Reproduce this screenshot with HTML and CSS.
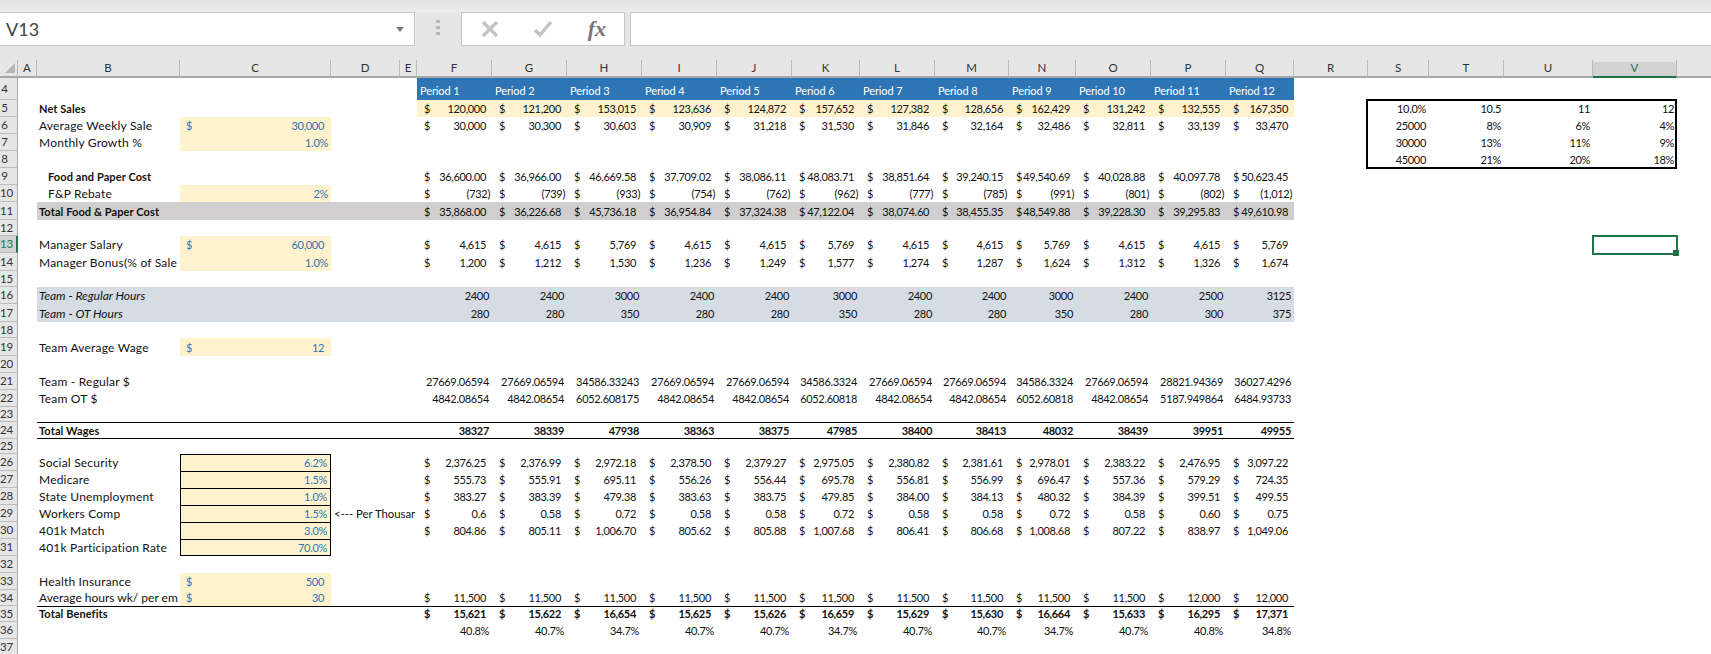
FILE: index.html
```html
<!DOCTYPE html>
<html lang="en">
<head>
<meta charset="utf-8">
<title>V13 - Sheet</title>
<link rel="stylesheet" href="styles.css">
</head>
<body>
<header class="fbar">
  <div class="namebox"><span class="ref">V13</span><svg class="caret" width="8" height="5" viewBox="0 0 8 5"><path d="M0 0h8L4 5z"/></svg></div>
  <div class="grip"><b></b><b></b><b></b></div>
  <div class="btns">
    <svg width="18" height="16" viewBox="0 0 18 16"><path d="M2 1l14 14M16 1L2 15" class="ic"/></svg>
    <svg width="20" height="16" viewBox="0 0 20 16"><path d="M2 9l5 5L18 1" class="ic"/></svg>
    <span class="fx">fx</span>
  </div>
  <div class="input"></div>
</header>
<table class="sheet">
<colgroup>
<col class="w18"><col class="w19"><col class="w143"><col class="w151"><col class="w69"><col class="w17">
<col class="w75"><col class="w75"><col class="w75"><col class="w75"><col class="w75"><col class="w68"><col class="w75"><col class="w74"><col class="w67"><col class="w75"><col class="w75"><col class="w68">
<col class="w74"><col class="w61"><col class="w75"><col class="w89"><col class="w84"><col class="w34">
</colgroup>
<thead>
<tr class="heads"><th class="corner"><svg width="10" height="10" viewBox="0 0 10 10"><path d="M10 0v10H0z"/></svg></th><th>A</th><th>B</th><th>C</th><th>D</th><th>E</th><th>F</th><th>G</th><th>H</th><th>I</th><th>J</th><th>K</th><th>L</th><th>M</th><th>N</th><th>O</th><th>P</th><th>Q</th><th>R</th><th>S</th><th>T</th><th>U</th><th class="cur">V</th><th class="last"></th></tr>
</thead>
<tbody>
<tr class="h22 hdr"><th>4</th><td></td><td></td><td></td><td colspan="2"></td><td class="p">Period 1</td><td class="p">Period 2</td><td class="p">Period 3</td><td class="p">Period 4</td><td class="p">Period 5</td><td class="p">Period 6</td><td class="p">Period 7</td><td class="p">Period 8</td><td class="p">Period 9</td><td class="p">Period 10</td><td class="p">Period 11</td><td class="p">Period 12</td><td colspan="6" class="end"></td></tr>
<tr class="yel"><th>5</th><td></td><td class="l b">Net Sales</td><td></td><td colspan="2"></td><td class="a"><i>$</i>120,000</td><td class="a"><i>$</i>121,200</td><td class="a"><i>$</i>153,015</td><td class="a"><i>$</i>123,636</td><td class="a"><i>$</i>124,872</td><td class="a"><i>$</i>157,652</td><td class="a"><i>$</i>127,382</td><td class="a"><i>$</i>128,656</td><td class="a"><i>$</i>162,429</td><td class="a"><i>$</i>131,242</td><td class="a"><i>$</i>132,555</td><td class="a"><i>$</i>167,350</td><td></td><td class="n s"><div class="range"></div>10.0%</td><td class="n">10.5</td><td class="n">11</td><td class="n">12</td><td class="end"></td></tr>
<tr><th>6</th><td></td><td class="l">Average Weekly Sale</td><td class="in a"><i>$</i>30,000</td><td colspan="2"></td><td class="a"><i>$</i>30,000</td><td class="a"><i>$</i>30,300</td><td class="a"><i>$</i>30,603</td><td class="a"><i>$</i>30,909</td><td class="a"><i>$</i>31,218</td><td class="a"><i>$</i>31,530</td><td class="a"><i>$</i>31,846</td><td class="a"><i>$</i>32,164</td><td class="a"><i>$</i>32,486</td><td class="a"><i>$</i>32,811</td><td class="a"><i>$</i>33,139</td><td class="a"><i>$</i>33,470</td><td></td><td class="n s">25000</td><td class="n">8%</td><td class="n">6%</td><td class="n">4%</td><td class="end"></td></tr>
<tr><th>7</th><td></td><td class="l">Monthly Growth %</td><td class="in n">1.0%</td><td colspan="14"></td><td></td><td class="n s">30000</td><td class="n">13%</td><td class="n">11%</td><td class="n">9%</td><td class="end"></td></tr>
<tr><th>8</th><td></td><td></td><td></td><td colspan="14"></td><td></td><td class="n s">45000</td><td class="n">21%</td><td class="n">20%</td><td class="n">18%</td><td class="end"></td></tr>
<tr><th>9</th><td></td><td class="l b ind">Food and Paper Cost</td><td></td><td colspan="2"></td><td class="a"><i>$</i>36,600.00</td><td class="a"><i>$</i>36,966.00</td><td class="a"><i>$</i>46,669.58</td><td class="a"><i>$</i>37,709.02</td><td class="a"><i>$</i>38,086.11</td><td class="a"><i>$</i>48,083.71</td><td class="a"><i>$</i>38,851.64</td><td class="a"><i>$</i>39,240.15</td><td class="a"><i>$</i>49,540.69</td><td class="a"><i>$</i>40,028.88</td><td class="a"><i>$</i>40,097.78</td><td class="a"><i>$</i>50,623.45</td><td colspan="6" class="end"></td></tr>
<tr><th>10</th><td></td><td class="l ind">F&amp;P Rebate</td><td class="in n">2%</td><td colspan="2"></td><td class="a"><i>$</i><u>(732)</u></td><td class="a"><i>$</i><u>(739)</u></td><td class="a"><i>$</i><u>(933)</u></td><td class="a"><i>$</i><u>(754)</u></td><td class="a"><i>$</i><u>(762)</u></td><td class="a"><i>$</i><u>(962)</u></td><td class="a"><i>$</i><u>(777)</u></td><td class="a"><i>$</i><u>(785)</u></td><td class="a"><i>$</i><u>(991)</u></td><td class="a"><i>$</i><u>(801)</u></td><td class="a"><i>$</i><u>(802)</u></td><td class="a"><i>$</i><u>(1,012)</u></td><td colspan="6" class="end"></td></tr>
<tr class="h18 gray"><th>11</th><td></td><td class="l b">Total Food &amp; Paper Cost</td><td></td><td colspan="2"></td><td class="a"><i>$</i>35,868.00</td><td class="a"><i>$</i>36,226.68</td><td class="a"><i>$</i>45,736.18</td><td class="a"><i>$</i>36,954.84</td><td class="a"><i>$</i>37,324.38</td><td class="a"><i>$</i>47,122.04</td><td class="a"><i>$</i>38,074.60</td><td class="a"><i>$</i>38,455.35</td><td class="a"><i>$</i>48,549.88</td><td class="a"><i>$</i>39,228.30</td><td class="a"><i>$</i>39,295.83</td><td class="a"><i>$</i>49,610.98</td><td colspan="6" class="end"></td></tr>
<tr class="h16"><th>12</th><td colspan="23"></td></tr>
<tr><th class="cur">13</th><td></td><td class="l">Manager Salary</td><td class="in a"><i>$</i>60,000</td><td colspan="2"></td><td class="a"><i>$</i>4,615</td><td class="a"><i>$</i>4,615</td><td class="a"><i>$</i>5,769</td><td class="a"><i>$</i>4,615</td><td class="a"><i>$</i>4,615</td><td class="a"><i>$</i>5,769</td><td class="a"><i>$</i>4,615</td><td class="a"><i>$</i>4,615</td><td class="a"><i>$</i>5,769</td><td class="a"><i>$</i>4,615</td><td class="a"><i>$</i>4,615</td><td class="a"><i>$</i>5,769</td><td colspan="4"></td><td class="v13"><div class="sel"><span class="handle"></span></div></td><td class="end"></td></tr>
<tr class="h18"><th>14</th><td></td><td class="l">Manager Bonus(% of Sale</td><td class="in n">1.0%</td><td colspan="2"></td><td class="a"><i>$</i>1,200</td><td class="a"><i>$</i>1,212</td><td class="a"><i>$</i>1,530</td><td class="a"><i>$</i>1,236</td><td class="a"><i>$</i>1,249</td><td class="a"><i>$</i>1,577</td><td class="a"><i>$</i>1,274</td><td class="a"><i>$</i>1,287</td><td class="a"><i>$</i>1,624</td><td class="a"><i>$</i>1,312</td><td class="a"><i>$</i>1,326</td><td class="a"><i>$</i>1,674</td><td colspan="6" class="end"></td></tr>
<tr class="h16"><th>15</th><td colspan="23"></td></tr>
<tr class="slate"><th>16</th><td></td><td class="l it">Team - Regular Hours</td><td></td><td colspan="2"></td><td class="n">2400</td><td class="n">2400</td><td class="n">3000</td><td class="n">2400</td><td class="n">2400</td><td class="n">3000</td><td class="n">2400</td><td class="n">2400</td><td class="n">3000</td><td class="n">2400</td><td class="n">2500</td><td class="n">3125</td><td colspan="6" class="end"></td></tr>
<tr class="h18 slate"><th>17</th><td></td><td class="l it">Team - OT Hours</td><td></td><td colspan="2"></td><td class="n">280</td><td class="n">280</td><td class="n">350</td><td class="n">280</td><td class="n">280</td><td class="n">350</td><td class="n">280</td><td class="n">280</td><td class="n">350</td><td class="n">280</td><td class="n">300</td><td class="n">375</td><td colspan="6" class="end"></td></tr>
<tr class="h16"><th>18</th><td colspan="23"></td></tr>
<tr class="h18"><th>19</th><td></td><td class="l">Team Average Wage</td><td class="in a"><i>$</i>12</td><td colspan="20"></td></tr>
<tr><th>20</th><td colspan="23"></td></tr>
<tr><th>21</th><td></td><td class="l">Team - Regular $</td><td></td><td colspan="2"></td><td class="n">27669.06594</td><td class="n">27669.06594</td><td class="n">34586.33243</td><td class="n">27669.06594</td><td class="n">27669.06594</td><td class="n">34586.3324</td><td class="n">27669.06594</td><td class="n">27669.06594</td><td class="n">34586.3324</td><td class="n">27669.06594</td><td class="n">28821.94369</td><td class="n">36027.4296</td><td colspan="6" class="end"></td></tr>
<tr><th>22</th><td></td><td class="l">Team OT $</td><td></td><td colspan="2"></td><td class="n">4842.08654</td><td class="n">4842.08654</td><td class="n">6052.608175</td><td class="n">4842.08654</td><td class="n">4842.08654</td><td class="n">6052.60818</td><td class="n">4842.08654</td><td class="n">4842.08654</td><td class="n">6052.60818</td><td class="n">4842.08654</td><td class="n">5187.949864</td><td class="n">6484.93733</td><td colspan="6" class="end"></td></tr>
<tr class="h15"><th>23</th><td colspan="23"></td></tr>
<tr class="rule2"><th>24</th><td></td><td class="l b">Total Wages</td><td></td><td colspan="2"></td><td class="n b">38327</td><td class="n b">38339</td><td class="n b">47938</td><td class="n b">38363</td><td class="n b">38375</td><td class="n b">47985</td><td class="n b">38400</td><td class="n b">38413</td><td class="n b">48032</td><td class="n b">38439</td><td class="n b">39951</td><td class="n b">49955</td><td colspan="6" class="end"></td></tr>
<tr class="h15"><th>25</th><td colspan="23"></td></tr>
<tr><th>26</th><td></td><td class="l">Social Security</td><td class="in n box">6.2%</td><td colspan="2"></td><td class="a"><i>$</i>2,376.25</td><td class="a"><i>$</i>2,376.99</td><td class="a"><i>$</i>2,972.18</td><td class="a"><i>$</i>2,378.50</td><td class="a"><i>$</i>2,379.27</td><td class="a"><i>$</i>2,975.05</td><td class="a"><i>$</i>2,380.82</td><td class="a"><i>$</i>2,381.61</td><td class="a"><i>$</i>2,978.01</td><td class="a"><i>$</i>2,383.22</td><td class="a"><i>$</i>2,476.95</td><td class="a"><i>$</i>3,097.22</td><td colspan="6" class="end"></td></tr>
<tr><th>27</th><td></td><td class="l">Medicare</td><td class="in n box">1.5%</td><td colspan="2"></td><td class="a"><i>$</i>555.73</td><td class="a"><i>$</i>555.91</td><td class="a"><i>$</i>695.11</td><td class="a"><i>$</i>556.26</td><td class="a"><i>$</i>556.44</td><td class="a"><i>$</i>695.78</td><td class="a"><i>$</i>556.81</td><td class="a"><i>$</i>556.99</td><td class="a"><i>$</i>696.47</td><td class="a"><i>$</i>557.36</td><td class="a"><i>$</i>579.29</td><td class="a"><i>$</i>724.35</td><td colspan="6" class="end"></td></tr>
<tr><th>28</th><td></td><td class="l">State Unemployment</td><td class="in n box">1.0%</td><td colspan="2"></td><td class="a"><i>$</i>383.27</td><td class="a"><i>$</i>383.39</td><td class="a"><i>$</i>479.38</td><td class="a"><i>$</i>383.63</td><td class="a"><i>$</i>383.75</td><td class="a"><i>$</i>479.85</td><td class="a"><i>$</i>384.00</td><td class="a"><i>$</i>384.13</td><td class="a"><i>$</i>480.32</td><td class="a"><i>$</i>384.39</td><td class="a"><i>$</i>399.51</td><td class="a"><i>$</i>499.55</td><td colspan="6" class="end"></td></tr>
<tr><th>29</th><td></td><td class="l">Workers Comp</td><td class="in n box">1.5%</td><td colspan="2" class="note">&lt;--- Per Thousar</td><td class="a"><i>$</i>0.6</td><td class="a"><i>$</i>0.58</td><td class="a"><i>$</i>0.72</td><td class="a"><i>$</i>0.58</td><td class="a"><i>$</i>0.58</td><td class="a"><i>$</i>0.72</td><td class="a"><i>$</i>0.58</td><td class="a"><i>$</i>0.58</td><td class="a"><i>$</i>0.72</td><td class="a"><i>$</i>0.58</td><td class="a"><i>$</i>0.60</td><td class="a"><i>$</i>0.75</td><td colspan="6" class="end"></td></tr>
<tr><th>30</th><td></td><td class="l">401k Match</td><td class="in n box">3.0%</td><td colspan="2"></td><td class="a"><i>$</i>804.86</td><td class="a"><i>$</i>805.11</td><td class="a"><i>$</i>1,006.70</td><td class="a"><i>$</i>805.62</td><td class="a"><i>$</i>805.88</td><td class="a"><i>$</i>1,007.68</td><td class="a"><i>$</i>806.41</td><td class="a"><i>$</i>806.68</td><td class="a"><i>$</i>1,008.68</td><td class="a"><i>$</i>807.22</td><td class="a"><i>$</i>838.97</td><td class="a"><i>$</i>1,049.06</td><td colspan="6" class="end"></td></tr>
<tr><th>31</th><td></td><td class="l">401k Participation Rate</td><td class="in n box boxend">70.0%</td><td colspan="20"></td></tr>
<tr><th>32</th><td colspan="23"></td></tr>
<tr><th>33</th><td></td><td class="l">Health Insurance</td><td class="in a"><i>$</i>500</td><td colspan="20"></td></tr>
<tr class="h16"><th>34</th><td></td><td class="l fit">Average hours wk/ per em</td><td class="in a"><i>$</i>30</td><td colspan="2"></td><td class="a"><i>$</i>11,500</td><td class="a"><i>$</i>11,500</td><td class="a"><i>$</i>11,500</td><td class="a"><i>$</i>11,500</td><td class="a"><i>$</i>11,500</td><td class="a"><i>$</i>11,500</td><td class="a"><i>$</i>11,500</td><td class="a"><i>$</i>11,500</td><td class="a"><i>$</i>11,500</td><td class="a"><i>$</i>11,500</td><td class="a"><i>$</i>12,000</td><td class="a"><i>$</i>12,000</td><td colspan="6" class="end"></td></tr>
<tr class="h16 rule1"><th>35</th><td></td><td class="l b">Total Benefits</td><td></td><td colspan="2"></td><td class="a b"><i>$</i>15,621</td><td class="a b"><i>$</i>15,622</td><td class="a b"><i>$</i>16,654</td><td class="a b"><i>$</i>15,625</td><td class="a b"><i>$</i>15,626</td><td class="a b"><i>$</i>16,659</td><td class="a b"><i>$</i>15,629</td><td class="a b"><i>$</i>15,630</td><td class="a b"><i>$</i>16,664</td><td class="a b"><i>$</i>15,633</td><td class="a b"><i>$</i>16,295</td><td class="a b"><i>$</i>17,371</td><td colspan="6" class="end"></td></tr>
<tr><th>36</th><td colspan="5"></td><td class="n">40.8%</td><td class="n">40.7%</td><td class="n">34.7%</td><td class="n">40.7%</td><td class="n">40.7%</td><td class="n">34.7%</td><td class="n">40.7%</td><td class="n">40.7%</td><td class="n">34.7%</td><td class="n">40.7%</td><td class="n">40.8%</td><td class="n">34.8%</td><td colspan="6" class="end"></td></tr>
<tr><th>37</th><td colspan="23"></td></tr>
</tbody>
</table>
</body>
</html>
```
FILE: styles.css
```css
html, body { margin: 0; height: 654px; overflow: hidden; background: #fff; }
body { font-family: "Lato", "Liberation Sans", sans-serif; font-size: 11px; color: #111; }

.fbar { display: flex; align-items: flex-start; height: 60px; box-sizing: border-box; padding-top: 12px; background: linear-gradient(#e4e4e4 0, #ececec 12px, #e6e6e6 13px); }
.namebox { display: flex; align-items: center; justify-content: space-between; width: 415px; height: 34px; box-sizing: border-box; padding: 0 10px 0 6px; background: #fff; border: 1px solid #c6c6c6; border-left: 0; }
.ref { font-size: 18px; color: #444; }
.caret path { fill: #7a7a7a; }
.grip { display: flex; flex-direction: column; align-items: center; gap: 3px; width: 46px; padding-top: 8px; }
.grip b { width: 4px; height: 3px; background: #b8b8b8; }
.btns { display: flex; align-items: center; width: 164px; height: 34px; box-sizing: border-box; padding: 0 18px 0 19px; justify-content: space-between; background: #fff; border: 1px solid #c6c6c6; }
.ic { fill: none; stroke: #c4c4c4; stroke-width: 3.4; }
.fx { font: italic 700 22px "Liberation Serif", serif; color: #767676; }
.input { flex: 1; height: 34px; box-sizing: border-box; margin-left: 5px; background: #fff; border: 1px solid #c6c6c6; border-right: 0; }

.sheet { table-layout: fixed; width: 1711px; border-collapse: separate; border-spacing: 0; letter-spacing: -0.32px; }
.w18 { width: 18px; } .w19 { width: 19px; } .w143 { width: 143px; } .w151 { width: 151px; } .w69 { width: 69px; }
.w17 { width: 17px; } .w75 { width: 75px; } .w68 { width: 68px; } .w74 { width: 74px; } .w67 { width: 67px; }
.w61 { width: 61px; } .w89 { width: 89px; } .w84 { width: 84px; } .w34 { width: 34px; }

tr { height: 17px; }
.h15 { height: 15px; } .h16 { height: 16px; } .h18 { height: 18px; } .h22 { height: 22px; }

td, th { box-sizing: border-box; padding: 0; overflow: hidden; white-space: nowrap; font-weight: 400; line-height: 14px; vertical-align: bottom; }
td { padding-bottom: 1px; }

.heads { height: 18px; }
.heads th { position: relative; text-align: center; background: #e6e6e6; color: #333; font-size: 11.5px; letter-spacing: 0; vertical-align: middle; border-right: 1px solid #b9b9b9; border-bottom: 2px solid #a6a6a6; box-shadow: inset 0 2px 0 #e6e6e6; }
.heads .last { border-right: 0; }
.heads .cur { background: #d2d2d2; color: #217346; border-bottom-color: #217346; }
.corner svg { display: block; margin-left: 5px; }
.corner path { fill: #b5b5b5; }

tbody th { background: #e6e6e6; color: #333; font-size: 11.5px; letter-spacing: -0.2px; line-height: 14px; text-align: center; padding-right: 8px; vertical-align: middle; border-right: 1px solid #a6a6a6; border-bottom: 1px solid #bdbdbd; }
tbody th.cur { background: #d2d2d2; color: #217346; border-right: 2px solid #217346; }

.b { font-weight: 700; }
.l { font-size: 12px; letter-spacing: 0.2px; padding-left: 2px; }
.l.b { font-size: 11px; letter-spacing: 0.1px; }
.l.it { font-size: 12px; letter-spacing: 0; font-style: italic; }
.l.fit { letter-spacing: 0; }
td.ind { padding-left: 11px; }
i { font-style: normal; float: left; }
u { text-decoration: none; margin-right: -4px; }

.a { text-align: right; padding-left: 7px; padding-right: 6px; }
.n { text-align: right; padding-right: 3px; }
.p { background: #2e75b6; color: #fff; padding-left: 3px; padding-bottom: 2px; letter-spacing: -0.1px; }
.in { background: #fff2cc; color: #2e75b6; }
td.in.a { padding-right: 7px; padding-left: 6px; }
.box { border: 1px solid #000; border-bottom: 0; padding-bottom: 1px; }
.boxend { border-bottom: 1px solid #000; padding-bottom: 0; }
td.note { padding-left: 3px; font-size: 11.3px; letter-spacing: 0; }

.yel > td.a { background: #fff2cc; }
.gray > td:not(:first-of-type):not(.end) { background: #d0cece; }
.slate > td:not(:first-of-type):not(.end) { background: #d6dce4; }
.rule2 > td:not(:first-of-type):not(.end) { border-top: 1px solid #000; border-bottom: 1px solid #000; padding-bottom: 0; }
.rule1 > td:not(:first-of-type):not(.end) { border-top: 1px solid #000; }

.s { position: relative; overflow: visible; }
.range { position: absolute; z-index: 2; left: -2px; top: -1px; width: 311px; height: 70px; box-sizing: border-box; border: 2px solid #000; pointer-events: none; }
.v13 { position: relative; overflow: visible; }
.sel { position: absolute; z-index: 2; left: -1px; top: -1px; width: 86px; height: 20px; box-sizing: border-box; border: 2px solid #217346; }
.handle { position: absolute; right: -3px; bottom: -3px; width: 6px; height: 6px; background: #217346; }
```
